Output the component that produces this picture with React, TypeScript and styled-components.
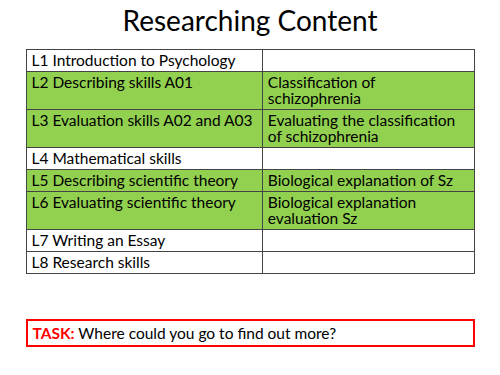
import React from 'react';
import styled, { createGlobalStyle } from 'styled-components';

const GlobalStyle = createGlobalStyle`
  body {
    margin: 0;
    background: #ffffff;
    font-family: Lato, "Liberation Sans", sans-serif;
    color: #000000;
  }
`;

const Slide = styled.div`
  width: 500px;
  height: 375px;
  display: flex;
  flex-direction: column;
  align-items: center;
  box-sizing: border-box;
  padding-top: 3px;
`;

const Title = styled.h1`
  margin: 0;
  font-size: 28px;
  font-weight: 400;
  line-height: 34px;
  height: 46px;
`;

const Table = styled.table`
  width: 449px;
  border-collapse: collapse;
  font-size: 15.5px;
  line-height: 16px;
`;

const Row = styled.tr<{ $green?: boolean }>`
  background: ${(p) => (p.$green ? '#92d050' : '#ffffff')};
`;

const Cell = styled.td<{ $w: number }>`
  width: ${(p) => p.$w}px;
  border: 1px solid #444444;
  padding: 2px 5px 3px 5px;
  vertical-align: top;
  text-align: left;
`;

const TaskBox = styled.div`
  margin-top: 45px;
  width: 449px;
  box-sizing: border-box;
  border: 2px solid #ff0000;
  padding: 3px 5px 2px;
  font-size: 15.5px;
  line-height: 19px;
`;

const TaskLabel = styled.span`
  color: #ff0000;
  font-weight: 700;
`;

const rows: { lesson: string; topic: string; green: boolean }[] = [
  { lesson: 'L1 Introduction to Psychology', topic: '', green: false },
  { lesson: 'L2 Describing skills A01', topic: 'Classification of schizophrenia', green: true },
  { lesson: 'L3 Evaluation skills A02 and A03', topic: 'Evaluating the classification of schizophrenia', green: true },
  { lesson: 'L4 Mathematical skills', topic: '', green: false },
  { lesson: 'L5 Describing scientific theory', topic: 'Biological explanation of Sz', green: true },
  { lesson: 'L6 Evaluating scientific theory', topic: 'Biological explanation evaluation Sz', green: true },
  { lesson: 'L7 Writing an Essay', topic: '', green: false },
  { lesson: 'L8 Research skills', topic: '', green: false },
];

function App() {
  return (
    <>
      <GlobalStyle />
      <Slide>
        <Title>Researching Content</Title>
        <Table>
          <tbody>
            {rows.map((r) => (
              <Row key={r.lesson} $green={r.green}>
                <Cell $w={238}>{r.lesson}</Cell>
                <Cell $w={211}>{r.topic || '\u00a0'}</Cell>
              </Row>
            ))}
          </tbody>
        </Table>
        <TaskBox>
          <TaskLabel>TASK:</TaskLabel> Where could you go to find out more?
        </TaskBox>
      </Slide>
    </>
  );
}

export default App;
